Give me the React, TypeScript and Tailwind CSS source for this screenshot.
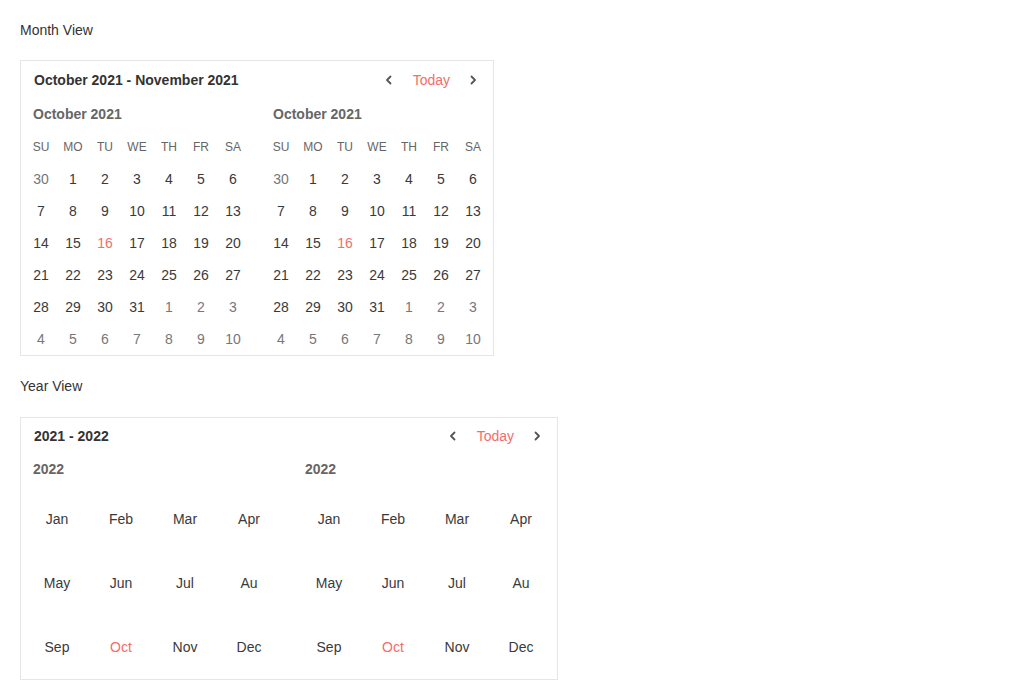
import React from "react";

const WEEK = ["SU", "MO", "TU", "WE", "TH", "FR", "SA"];
const MONTHS = ["Jan", "Feb", "Mar", "Apr", "May", "Jun", "Jul", "Au", "Sep", "Oct", "Nov", "Dec"];

// October 2021 grid: 30 Sep, then Oct 1-31, then Nov 1-10
const days: { n: number; muted: boolean }[] = [
  { n: 30, muted: true },
  ...Array.from({ length: 31 }, (_, i) => ({ n: i + 1, muted: false })),
  ...Array.from({ length: 10 }, (_, i) => ({ n: i + 1, muted: true })),
];

const Chevron: React.FC<{ dir: "left" | "right" }> = ({ dir }) => (
  <svg width="10" height="10" viewBox="0 0 10 10" fill="none">
    <path
      d={dir === "left" ? "M6.5 1.5 3 5l3.5 3.5" : "M3.5 1.5 7 5 3.5 8.5"}
      stroke="#555"
      strokeWidth="1.8"
      strokeLinecap="round"
      strokeLinejoin="round"
    />
  </svg>
);

const Header: React.FC<{ title: string; h: string }> = ({ title, h }) => (
  <div className={`flex items-center justify-between pl-[13px] pr-2 ${h}`}>
    <span className="text-sm font-bold text-[#333]">{title}</span>
    <div className="flex items-center">
      <button className="w-6 h-6 flex items-center justify-center">
        <Chevron dir="left" />
      </button>
      <span className="text-sm text-[#f56c6c] ml-3 mr-[11px]">Today</span>
      <button className="w-6 h-6 flex items-center justify-center">
        <Chevron dir="right" />
      </button>
    </div>
  </div>
);

const MonthPanel: React.FC = () => (
  <div className="w-[224px]">
    <div className="h-[30px] flex items-center pl-2 text-sm font-bold text-[#666]">October 2021</div>
    <div className="grid grid-cols-7 mt-[2px]">
      {WEEK.map((w) => (
        <div key={w} className="h-8 flex items-center justify-center text-xs text-[#666]">
          {w}
        </div>
      ))}
      {days.map((d, i) => (
        <div
          key={i}
          className={`h-8 flex items-center justify-center text-sm ${
            !d.muted && d.n === 16 ? "text-[#f56c6c]" : d.muted ? "text-[#777]" : "text-[#3a3a3a]"
          }`}
        >
          {d.n}
        </div>
      ))}
    </div>
  </div>
);

const YearPanel: React.FC = () => (
  <div className="w-[256px]">
    <div className="h-[30px] flex items-center pl-2 text-sm font-bold text-[#666]">2022</div>
    <div className="grid grid-cols-4 mt-[3px]">
      {MONTHS.map((m) => (
        <div
          key={m}
          className={`h-16 flex items-center justify-center text-sm ${
            m === "Oct" ? "text-[#f56c6c]" : "text-[#3a3a3a]"
          }`}
        >
          {m}
        </div>
      ))}
    </div>
  </div>
);

export default function App() {
  return (
    <div className="p-5 font-['Liberation_Sans',Arial,sans-serif] text-[#333] bg-white min-h-[700px]">
      <div className="text-sm leading-5 mb-5">Month View</div>
      <div className="w-[474px] border border-[#e6e6e6]">
        <Header title="October 2021 - November 2021" h="h-[38px]" />
        <div className="flex gap-4 px-1">
          <MonthPanel />
          <MonthPanel />
        </div>
      </div>

      <div className="text-sm leading-5 mt-5 mb-[21px]">Year View</div>
      <div className="w-[538px] border border-[#e6e6e6]">
        <Header title="2021 - 2022" h="h-[36px]" />
        <div className="flex gap-4 px-1">
          <YearPanel />
          <YearPanel />
        </div>
      </div>
    </div>
  );
}
